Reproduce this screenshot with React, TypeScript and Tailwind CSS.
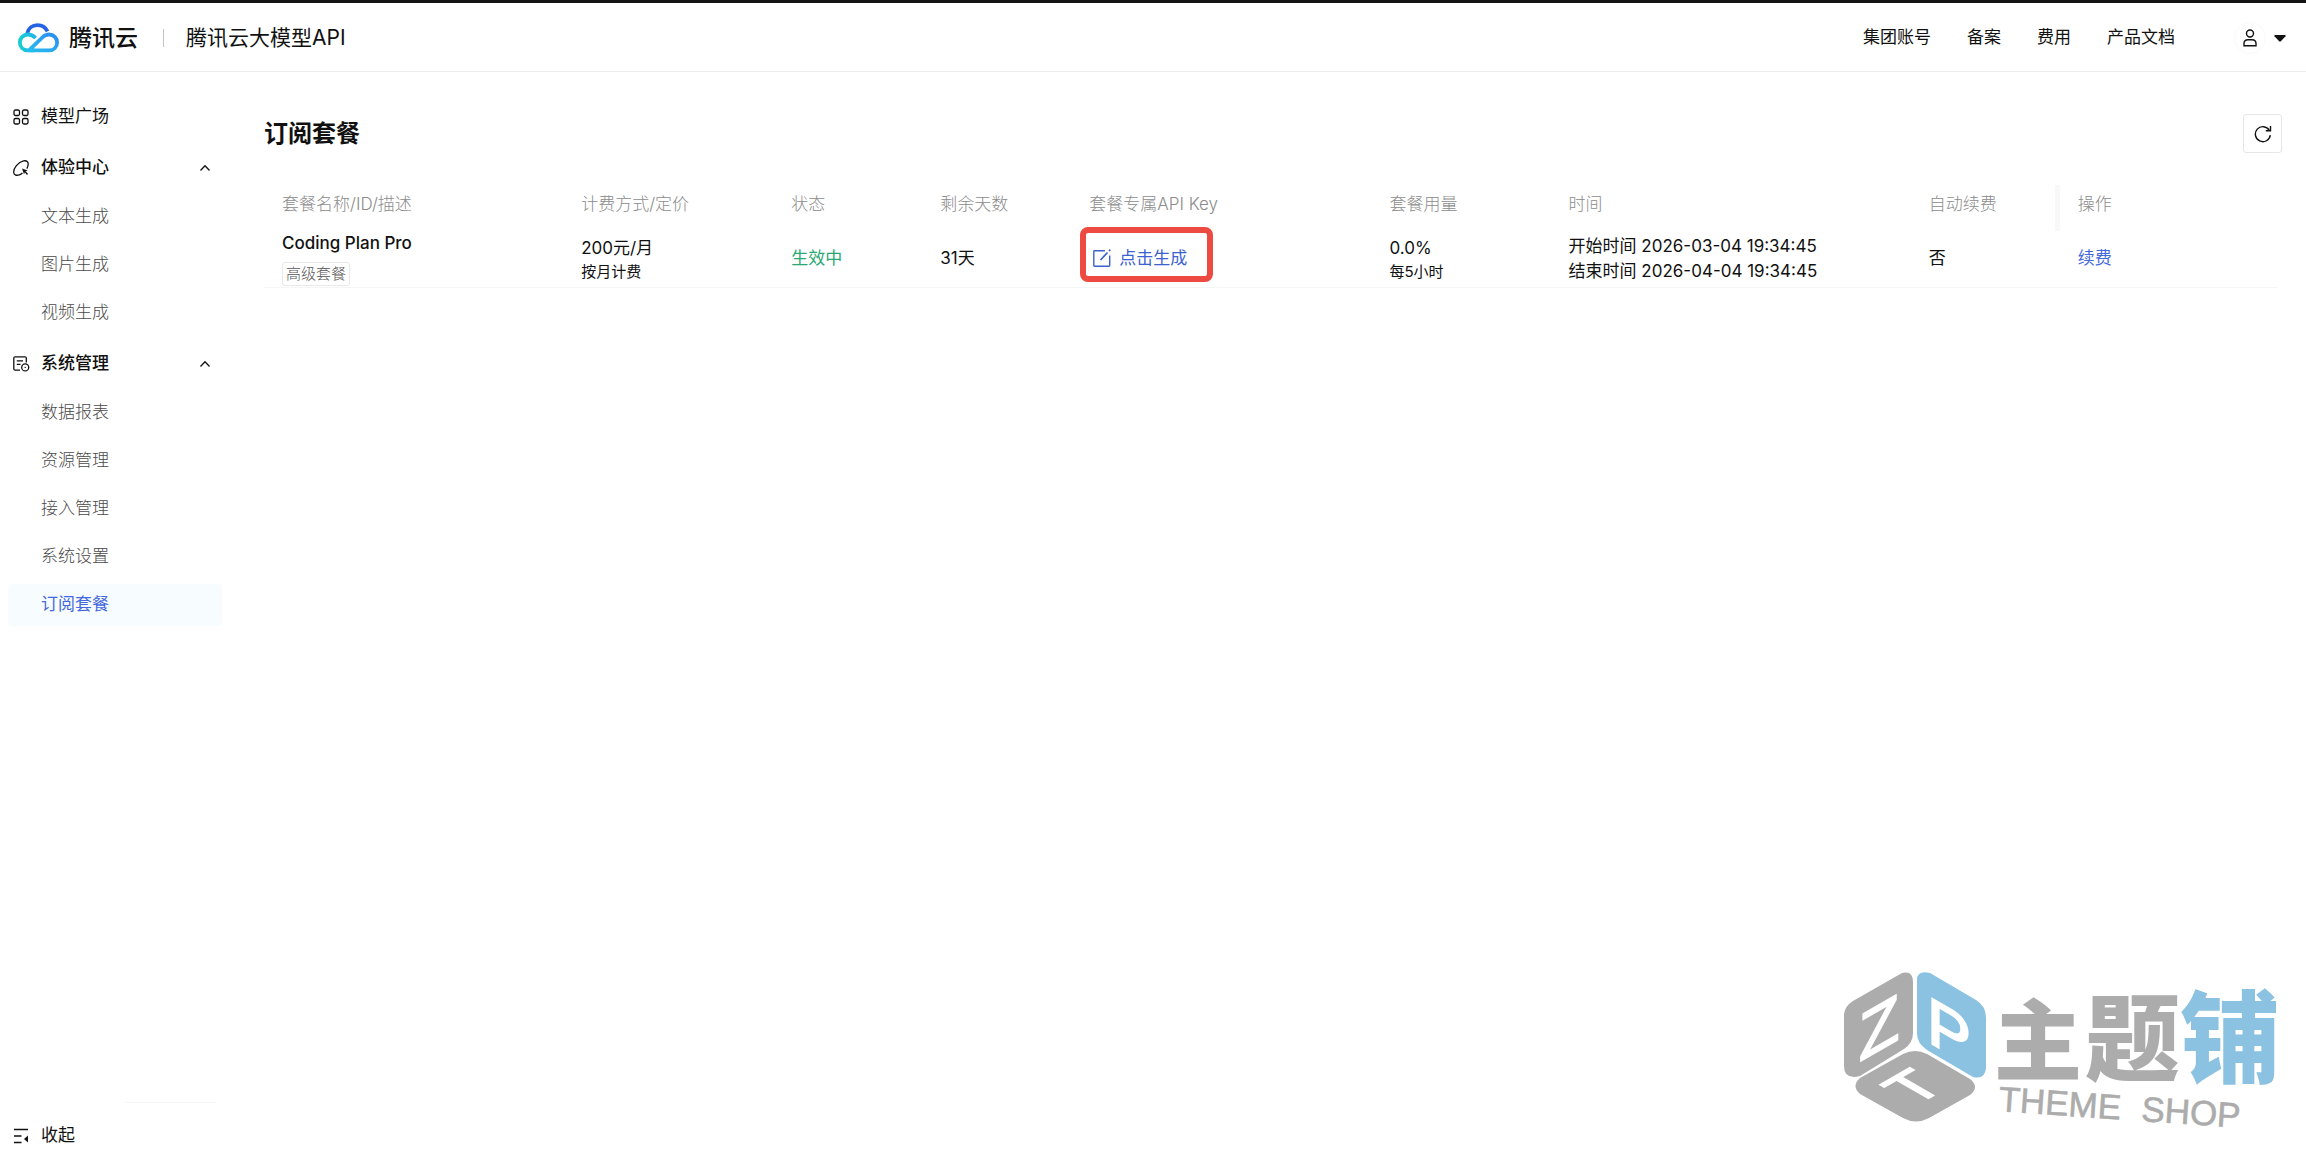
import type { ReactNode } from "react";

const navGroups = [
  {
    label: "体验中心",
    icon: <ExperienceIcon />,
    items: ["文本生成", "图片生成", "视频生成"],
  },
  {
    label: "系统管理",
    icon: <SystemIcon />,
    items: ["数据报表", "资源管理", "接入管理", "系统设置", "订阅套餐"],
  },
];

const active = "订阅套餐";

const columns = [
  { label: "套餐名称/ID/描述", width: "w-[299px]" },
  { label: "计费方式/定价", width: "w-[210px]" },
  { label: "状态", width: "w-[149px]" },
  { label: "剩余天数", width: "w-[149px]" },
  { label: "套餐专属API Key", width: "w-[300px]" },
  { label: "套餐用量", width: "w-[179px]" },
  { label: "时间", width: "w-[360px]" },
  { label: "自动续费", width: "w-[149px]" },
  { label: "操作", width: "w-[218px]" },
];

function CloudLogo() {
  return (
    <svg width="42" height="32" viewBox="0 0 44 33" fill="none" strokeWidth="4">
      <defs>
        <linearGradient id="cloud-left" x1="0" y1="0" x2="1" y2="0">
          <stop offset="0" stopColor="#17cdd3" />
          <stop offset="1" stopColor="#1fb6ea" />
        </linearGradient>
        <linearGradient id="cloud-right" x1="0" y1="1" x2="1" y2="0">
          <stop offset="0" stopColor="#27bdf0" />
          <stop offset="1" stopColor="#2b8df0" />
        </linearGradient>
      </defs>
      <path d="M10.5 12.5C11.5 6.500 16 3 21.500 3C26.500 3 30 5.500 32 9.500" stroke="#2464e4" />
      <path
        d="M19.500 16.500C17 14 14.500 12.800 11.500 12.800C6.500 12.800 3 16.500 3 21C3 26 6.500 29.500 11.500 29.500H18"
        stroke="url(#cloud-left)"
      />
      <path
        d="M12 29.500H33.500C38.500 29.500 42 26 42 21.200C42 16.500 38.500 12.800 33.500 12.800C30.500 12.800 28.500 14 26.500 16L13 29"
        stroke="url(#cloud-right)"
      />
    </svg>
  );
}

function GridIcon() {
  return (
    <svg width="16" height="16" viewBox="0 0 16 16" fill="none" stroke="currentColor" strokeWidth="1.300">
      <rect x="1" y="1" width="5.500" height="5.500" rx="1.500" />
      <rect x="9.500" y="1" width="5.500" height="5.500" rx="1.500" />
      <rect x="1" y="9.500" width="5.500" height="5.500" rx="1.500" />
      <rect x="9.500" y="9.500" width="5.500" height="5.500" rx="1.500" />
    </svg>
  );
}

function ExperienceIcon() {
  return (
    <svg width="16" height="16" viewBox="0 0 16 16" fill="none" stroke="currentColor" strokeWidth="1.300">
      <path d="M6.500 14.800C3.500 15.800 1 15.200.7 12.500C.3 8.500 5 2 10.500.9C14 .2 15.800 2.200 15 5.500C14.800 6.600 14.400 7.600 13.800 8.600M6.500 14.800C7.500 14.500 8.500 13.900 9.500 13.100" />
      <path d="M9 8.500L14.800 10.400L12.200 11.600L11 14.200Z" fill="currentColor" stroke="none" />
      <path d="M12 11.500L14.500 14.500" />
    </svg>
  );
}

function SystemIcon() {
  return (
    <svg width="17" height="16" viewBox="0 0 17 16" fill="none" stroke="currentColor" strokeWidth="1.300">
      <path d="M13.300 6.500V2.200Q13.300.8 11.900.8H2.200Q.8.800.8 2.200V12.800Q.8 14.200 2.200 14.200H7" />
      <path d="M3.800 4.800H10M3.800 8.300H7.500" />
      <circle cx="12.200" cy="11.400" r="3.500" />
      <circle cx="12.200" cy="11.400" r=".7" fill="currentColor" stroke="none" />
    </svg>
  );
}

function ChevronUp() {
  return (
    <svg width="12" height="8" viewBox="0 0 12 8" fill="none" stroke="currentColor" strokeWidth="1.300">
      <path d="M1.500 6.500L6 1.800L10.500 6.500" />
    </svg>
  );
}

function CollapseIcon() {
  return (
    <svg width="16" height="16" viewBox="0 0 16 16" fill="none" stroke="currentColor" strokeWidth="1.400">
      <path d="M1 1.500H15M1 8H8.500M1 14.500H8.500" />
      <path d="M11 11L15 7.500V14.500Z" fill="currentColor" stroke="none" />
    </svg>
  );
}

function UserIcon() {
  return (
    <svg width="14" height="18" viewBox="0 0 14 18" fill="none" stroke="currentColor" strokeWidth="1.400">
      <circle cx="7" cy="4.500" r="3.500" />
      <path d="M1 16.700V14.500C1 12 2.700 10.700 5 10.700H9C11.300 10.700 13 12 13 14.500V16.700Z" />
    </svg>
  );
}

function RefreshIcon() {
  return (
    <svg width="18" height="18" viewBox="0 0 18 18" fill="none" stroke="currentColor" strokeWidth="1.400">
      <path d="M16.300 10.200A7.500 7.500 0 1 1 15.300 5.300" />
      <path d="M16.500 1V5.800H11.800" />
    </svg>
  );
}

function EditIcon() {
  return (
    <svg width="18" height="18" viewBox="0 0 18 18" fill="none" stroke="currentColor" strokeWidth="1.400">
      <path d="M12 1.800H1.500Q.8 1.800.8 2.500V16.500Q.8 17.200 1.500 17.200H16Q16.700 17.200 16.700 16.500V6.500" />
      <path d="M7.500 11L14.500 3.500M16 2L17.300.6" strokeWidth="1.700" />
    </svg>
  );
}

function ThemeShopMark() {
  return (
    <svg
      aria-label="主题铺 THEME SHOP"
      className="pointer-events-none absolute right-4 bottom-4 h-[190px] w-[460px] font-['Liberation_Sans','Noto_Sans_CJK_SC',sans-serif]"
      viewBox="1830 954 460 190"
    >
      {/* Cube faces */}
      <path
        d="M1902 973Q1913 970 1913 982V1033Q1913 1043 1904 1049L1860 1076Q1844 1080 1844 1066V1014Q1845 1006 1853 1001Z"
        fill="#acacac"
      />
      <path
        d="M1917 980Q1917 970 1930 973L1976 1000Q1986 1006 1986 1018V1068Q1985 1080 1973 1077L1927 1050Q1917 1043 1917 1034Z"
        fill="#8bc2e2"
      />
      <path
        d="M1903 1054Q1915 1048 1927 1054L1970 1079Q1980 1087 1970 1095L1929 1118Q1916 1125 1903 1118L1860 1094Q1851 1086 1860 1078Z"
        fill="#acacac"
      />
      {/* Cube letters, each sheared onto its face */}
      <g fill="#fff" stroke="#fff" strokeWidth="2">
        <text transform="translate(1859 1062) skewY(-30)" fontSize="66">
          Z
        </text>
        <text transform="translate(1927 1041) skewY(30)" fontSize="66">
          P
        </text>
        <text transform="matrix(.87 -.5 .87 .5 1915 1106)" fontSize="60">
          T
        </text>
      </g>
      <g fontWeight="900" className="font-['Noto_Sans_CJK_SC',sans-serif]">
        <text x="1994" y="1073" fontSize="88" fill="#acacac">
          主
        </text>
        <text x="2085" y="1074" fontSize="95" fill="#acacac">
          题
        </text>
        <text x="2180" y="1075" fontSize="100" fill="#8bc2e2">
          铺
        </text>
      </g>
      <g fill="#acacac" stroke="#acacac" strokeWidth=".6" fontSize="35" transform="rotate(4 1998 1111)">
        <text x="1998" y="1111">
          THEME
        </text>
        <text x="2141" y="1111">
          SHOP
        </text>
      </g>
    </svg>
  );
}

function Header() {
  return (
    <header className="flex h-[72px] items-center border-t-3 border-b border-t-[#141414] border-b-[#ededed] pt-[2px] pr-5 pl-[17px]">
      <a href="#" className="flex items-center gap-[10px]">
        <CloudLogo />
        <span className="text-[23px] font-medium">腾讯云</span>
      </a>
      <span className="mr-[22px] ml-[25px] h-[18px] w-px bg-[#c4c4c4]" />
      <span className="text-[21px]">腾讯云大模型API</span>
      <nav className="ml-auto flex items-center gap-9">
        <a href="#">集团账号</a>
        <a href="#">备案</a>
        <a href="#">费用</a>
        <a href="#">产品文档</a>
      </nav>
      <button aria-label="账号" className="ml-[59px] flex items-center gap-2">
        <span className="flex size-8 items-center justify-center rounded-full border border-[#fafafa]">
          <UserIcon />
        </span>
        <svg width="12" height="7" viewBox="0 0 12 7" fill="currentColor">
          <path d="M1 0H11Q12 .5 11.500 1.200L6.800 6.300Q6 7 5.200 6.300L.5 1.200Q0 .5 1 0Z" />
        </svg>
      </button>
    </header>
  );
}

function NavHeading({ icon, children }: { icon: ReactNode; children: ReactNode }) {
  return (
    <>
      <span className="flex w-[33px] pl-[5px]">{icon}</span>
      {children}
    </>
  );
}

function Sidebar() {
  return (
    <aside className="flex w-[230px] shrink-0 flex-col justify-between px-2 pt-6 pb-[3px]">
      <nav className="flex flex-col gap-[9px]">
        <a href="#" className="flex h-[42px] items-center">
          <NavHeading icon={<GridIcon />}>模型广场</NavHeading>
        </a>
        {navGroups.map((group) => (
          <div key={group.label}>
            <button className="flex h-[42px] w-full items-center pr-[11px] font-medium">
              <NavHeading icon={group.icon}>{group.label}</NavHeading>
              <span className="ml-auto">
                <ChevronUp />
              </span>
            </button>
            <div className="mt-[7px] flex flex-col gap-[6px]">
              {group.items.map((item) => (
                <a
                  key={item}
                  href="#"
                  className={
                    item === active
                      ? "flex h-[42px] items-center rounded bg-[#f7fdff] pl-[33px] text-[#4468dd]"
                      : "flex h-[42px] items-center pl-[33px] font-light text-[#4a4a4a]"
                  }
                >
                  {item}
                </a>
              ))}
            </div>
          </div>
        ))}
      </nav>
      <div>
        <div className="ml-[118px] h-px w-[90px] bg-[#f5f5f5]" />
        <button className="mt-3 flex h-[42px] items-center">
          <NavHeading icon={<CollapseIcon />}>收起</NavHeading>
        </button>
      </div>
    </aside>
  );
}

function PlanTable() {
  return (
    <table className="mt-6 w-full table-fixed text-left">
      <thead>
        <tr className="h-[53px] text-[#8c8c8c]">
          {columns.map((col) => (
            <th key={col.label} className={`${col.width} relative pt-[2px] pl-[18px] font-light`}>
              {col.label === "操作" && (
                <span className="absolute top-2 -left-[5px] h-[46px] w-[5px] bg-[#f7f9f9]" />
              )}
              {col.label}
            </th>
          ))}
        </tr>
      </thead>
      <tbody>
        <tr className="h-[57px] border-b border-[#f5f5f5] *:pl-[18px]">
          <td className="align-top">
            <div className="leading-[26px] font-medium">Coding Plan Pro</div>
            <span className="mt-[6px] flex h-6 w-fit items-center rounded-[3px] border border-[#e8e8e8] px-[3px] text-[15px] font-light text-[#555]">
              高级套餐
            </span>
          </td>
          <td className="pt-[3px] leading-6">
            <div>200元/月</div>
            <div className="text-[15px]">按月计费</div>
          </td>
          <td className="text-[#2aa876]">生效中</td>
          <td>31天</td>
          <td className="relative">
            <span className="pointer-events-none absolute -top-[3px] left-[9px] h-[55px] w-[133px] rounded-lg border-6 border-[#ed4a42]" />
            <button className="ml-1 flex items-center gap-2 text-[#3b62cf]">
              <EditIcon />
              点击生成
            </button>
          </td>
          <td className="pt-[3px] leading-6">
            <div>0.0%</div>
            <div className="text-[15px]">每5小时</div>
          </td>
          <td className="pt-[2px] leading-[25px]">
            <div>开始时间 2026-03-04 19:34:45</div>
            <div>结束时间 2026-04-04 19:34:45</div>
          </td>
          <td>否</td>
          <td>
            <a href="#" className="text-[#4468dd]">
              续费
            </a>
          </td>
        </tr>
      </tbody>
    </table>
  );
}

export default function App() {
  return (
    <div className="relative flex min-h-screen flex-col bg-white font-[Inter,'Noto_Sans_CJK_SC',sans-serif] text-[17px] text-[#111]">
      <Header />
      <div className="flex flex-1">
        <Sidebar />
        <main className="min-w-0 flex-1 pt-[42px] pr-7 pl-[34px]">
          <div className="-mr-1 flex items-center justify-between">
            <h1 className="text-2xl font-semibold">订阅套餐</h1>
            <button
              aria-label="刷新"
              className="flex size-[39px] items-center justify-center rounded-[3px] border border-[#e6e6e6]"
            >
              <RefreshIcon />
            </button>
          </div>
          <PlanTable />
        </main>
      </div>
      <ThemeShopMark />
    </div>
  );
}
